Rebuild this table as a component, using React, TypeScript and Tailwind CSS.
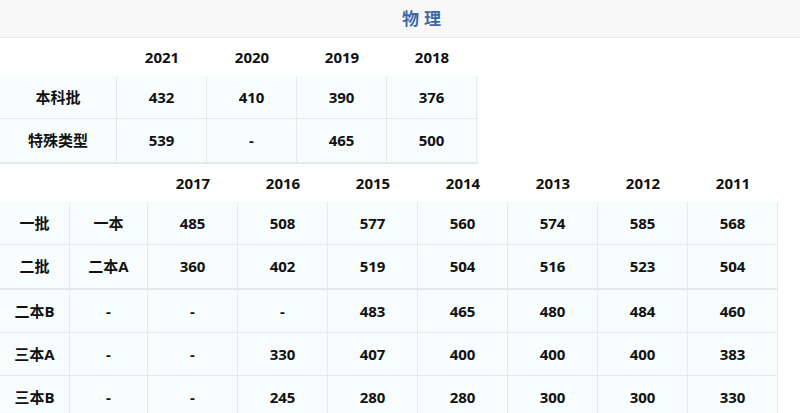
import React from 'react';

const topYears = ['2021', '2020', '2019', '2018'];
const topRows = [
  { label: '本科批', values: ['432', '410', '390', '376'] },
  { label: '特殊类型', values: ['539', '-', '465', '500'] },
];

const oldYears = ['2017', '2016', '2015', '2014', '2013', '2012', '2011'];
const oldRowsA = [
  ['一批', '一本', '485', '508', '577', '560', '574', '585', '568'],
  ['二批', '二本A', '360', '402', '519', '504', '516', '523', '504'],
];
const oldRowsB = [
  ['二本B', '-', '-', '-', '483', '465', '480', '484', '460'],
  ['三本A', '-', '-', '330', '407', '400', '400', '400', '383'],
  ['三本B', '-', '-', '245', '280', '280', '300', '300', '330'],
];

const font = { fontFamily: '"Open Sans", "Noto Sans CJK SC", sans-serif' };

const oldCols = 'grid grid-cols-[70px_78px_90px_90px_90px_90px_90px_90px_90px] w-[778px]';

export default function App() {
  return (
    <div className="w-[800px] h-[413px] overflow-hidden bg-white text-[15px] font-bold text-[#111]" style={font}>
      <div className="h-[38px] flex items-center justify-center bg-[#f8f8f8] border-b border-[#ececec]">
        <h2 className="text-[17px] font-bold tracking-[5px] text-[#3d69a5] pl-[48px]">物理</h2>
      </div>

      {/* 2018 - 2021 */}
      <div className="w-[478px] border-b-2 border-[#e4e8e9]">
        <div className="grid grid-cols-[117px_90px_90px_90px_90px] h-[38px] items-center text-center">
          <div />
          {topYears.map((y) => (
            <div key={y}>{y}</div>
          ))}
        </div>
        {topRows.map((row, i) => (
          <div
            key={row.label}
            className={`grid grid-cols-[117px_90px_90px_90px_90px] h-[43px] bg-[#f7fcfc] ${i === 0 ? 'border-b border-[#e5eaeb]' : ''}`}
          >
            <div className="flex items-center justify-center border-r border-[#e5eaeb]">{row.label}</div>
            {row.values.map((v, j) => (
              <div key={j} className="flex items-center justify-center border-r border-[#e5eaeb]">
                {v}
              </div>
            ))}
          </div>
        ))}
      </div>

      {/* 2011 - 2017 */}
      <div className={`${oldCols} h-[38px] items-center text-center`}>
        <div />
        <div />
        {oldYears.map((y) => (
          <div key={y}>{y}</div>
        ))}
      </div>
      <div className="w-[778px] border-b-2 border-[#e4e8e9]">
        {oldRowsA.map((row, i) => (
          <div key={i} className={`${oldCols} h-[43px] bg-[#f7fcfc] ${i === 0 ? 'border-b border-[#e5eaeb]' : ''}`}>
            {row.map((c, j) => (
              <div key={j} className="flex items-center justify-center border-r border-[#e5eaeb]">
                {c}
              </div>
            ))}
          </div>
        ))}
      </div>
      <div className="w-[778px]">
        {oldRowsB.map((row, i) => (
          <div key={i} className={`${oldCols} h-[43px] bg-[#f7fcfc] border-b border-[#e5eaeb]`}>
            {row.map((c, j) => (
              <div key={j} className="flex items-center justify-center border-r border-[#e5eaeb]">
                {c}
              </div>
            ))}
          </div>
        ))}
      </div>
    </div>
  );
}
